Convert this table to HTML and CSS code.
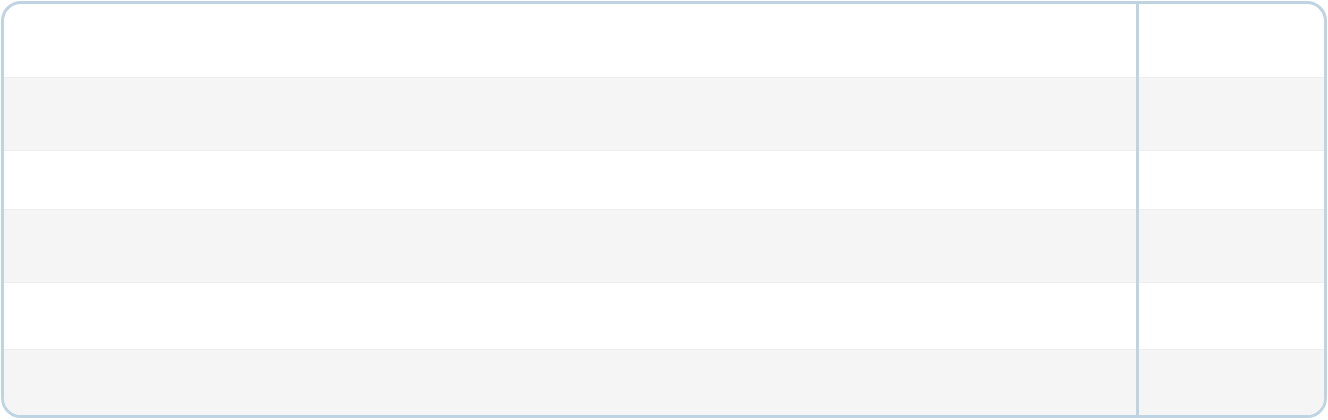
FILE: index.html
```html
<!DOCTYPE html>
<html>
<head>
<meta charset="utf-8">
<link rel="stylesheet" href="styles.css">
</head>
<body>
<div class="frame">
  <table class="grid">
    <colgroup><col class="c-main"><col class="c-side"></colgroup>
    <thead>
      <tr class="r-head"><th class="main"></th><th></th></tr>
    </thead>
    <tbody>
      <tr class="r1 alt"><td class="main"></td><td></td></tr>
      <tr class="r2"><td class="main"></td><td></td></tr>
      <tr class="r1 alt"><td class="main"></td><td></td></tr>
      <tr class="r3"><td class="main"></td><td></td></tr>
      <tr class="r4 alt"><td class="main"></td><td></td></tr>
    </tbody>
  </table>
</div>
</body>
</html>
```
FILE: styles.css
```css
html, body { margin: 0; padding: 0; background: #ffffff; }
body { padding: 1px 0 0 1px; font-family: "Liberation Sans", Arial, sans-serif; }
.frame {
  width: 1320px;
  height: 411px;
  border: 3px solid #bfd4e2;
  border-radius: 20px;
  overflow: hidden;
  background: #ffffff;
}
.grid {
  width: 100%;
  border-collapse: collapse;
  table-layout: fixed;
}
.c-main { width: 1133px; }
.c-side { width: 187px; }
.grid th, .grid td { padding: 0; }
.grid .main { border-right: 3px solid #bfd4e2; }
.r-head { height: 73px; }
tbody tr td { border-top: 1px solid #efefef; }
.r1 { height: 73px; }
.r2 { height: 59px; }
.r3 { height: 67px; }
.r4 { height: 66px; }
.alt { background: #f5f5f5; }
```
